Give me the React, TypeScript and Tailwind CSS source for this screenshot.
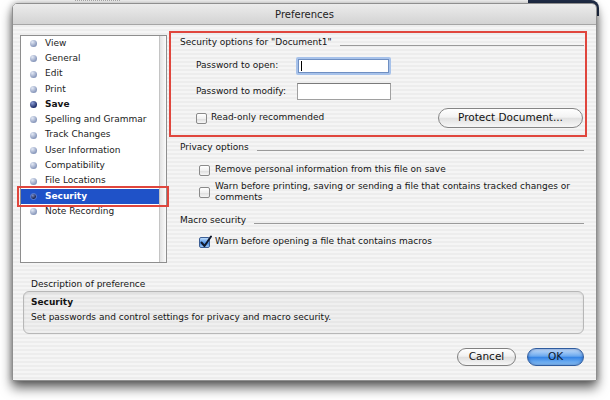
import React from "react";

function Bullet({ kind }: { kind: "normal" | "dark" | "sel" }) {
  if (kind === "dark")
    return <div className="w-[7px] h-[7px] rounded-full bg-[radial-gradient(circle_at_35%_30%,#8ea0d6,#1d2d6a_70%)] shrink-0" />;
  if (kind === "sel")
    return <div className="w-[7px] h-[7px] rounded-full bg-[radial-gradient(circle_at_35%_30%,#7d8fc9,#14204d_70%)] border border-[#5f7fd6] shrink-0" />;
  return <div className="w-[7px] h-[7px] rounded-full bg-[radial-gradient(circle_at_35%_30%,#e3e9f5,#8393b8_75%)] shrink-0" />;
}

function Checkbox({ checked }: { checked?: boolean }) {
  if (checked)
    return (
      <div className="relative w-[11px] h-[11px] rounded-[2px] border border-[#3d5f95] bg-[linear-gradient(#bcdcfb,#5d9be8_50%,#3f84e0_55%,#9cc8f5)] shrink-0">
        <svg className="absolute left-[0px] top-[-3px]" width="12" height="13" viewBox="0 0 12 13">
          <path d="M1.5 7.5 L4.5 11 L11 1.5" fill="none" stroke="#111a2e" strokeWidth="2" strokeLinecap="round" strokeLinejoin="round" />
        </svg>
      </div>
    );
  return <div className="w-[11px] h-[11px] rounded-[2px] border border-[#8a8a8a] bg-[linear-gradient(#ffffff,#f0f0f0_50%,#dedede_55%,#f6f6f6)] shrink-0" />;
}

function Heading({ text }: { text: string }) {
  return (
    <div className="flex items-center h-[12px]">
      <span className="whitespace-nowrap">{text}</span>
      <div className="flex-1 h-px bg-[#9a9a9a] ml-[8px] mt-[5px]" />
    </div>
  );
}

const items: { label: string; kind: "normal" | "dark" | "sel" }[] = [
  { label: "View", kind: "normal" },
  { label: "General", kind: "normal" },
  { label: "Edit", kind: "normal" },
  { label: "Print", kind: "normal" },
  { label: "Save", kind: "dark" },
  { label: "Spelling and Grammar", kind: "normal" },
  { label: "Track Changes", kind: "normal" },
  { label: "User Information", kind: "normal" },
  { label: "Compatibility", kind: "normal" },
  { label: "File Locations", kind: "normal" },
  { label: "Security", kind: "sel" },
  { label: "Note Recording", kind: "normal" },
];

export default function App() {
  return (
    <div className="relative w-[610px] h-[400px] bg-white overflow-hidden font-['DejaVu_Sans',sans-serif] text-[9px] text-[#141414]">
      <div className="absolute left-[528px] top-0 w-[71px] h-[16px] bg-[#22304c] rounded-tr-[8px]" />
      <div className="absolute left-[75px] top-0 w-[45px] h-[2px] border-t border-dotted border-[#b5b5b5]" />
      <div className="relative ml-[12px] mt-[3px] w-[585px] h-[378px] flex flex-col rounded-t-[5px] border border-[#8f8f8f] shadow-[0_7px_12px_rgba(0,0,0,0.6),0_0_6px_rgba(0,0,0,0.3)] overflow-hidden">
        <div className="h-[21px] shrink-0 flex items-center justify-center bg-[linear-gradient(#ececec,#d3d3d3)] border-b border-[#a5a5a5] text-[10px] text-[#222]">
          Preferences
        </div>
        <div className="flex-1 flex flex-col pl-[7px] pr-[8px] pt-[6px] bg-[repeating-linear-gradient(#ededed_0px,#ededed_2px,#f5f5f5_2px,#f5f5f5_4px)]">
          <div className="flex h-[232px]">
            {/* list */}
            <div className="relative mt-[4px] h-[228px] w-[147px] flex border border-[#8e8e8e] bg-white shrink-0">
              <div className="flex-1 flex flex-col">
                {items.map((it) => (
                  <div
                    key={it.label}
                    className={
                      it.kind === "sel"
                        ? "h-[15.27px] flex items-center pl-[9px] gap-[8px] bg-[#1f52c8] text-white font-bold"
                        : it.kind === "dark"
                        ? "h-[15.27px] flex items-center pl-[9px] gap-[8px] font-bold"
                        : "h-[15.27px] flex items-center pl-[9px] gap-[8px] text-[#222]"
                    }
                  >
                    <Bullet kind={it.kind} />
                    <span className="whitespace-nowrap">{it.label}</span>
                  </div>
                ))}
              </div>
              <div className="w-[7px] border-l border-[#c4c4c4] bg-[linear-gradient(90deg,#e2e2e2,#fbfbfb)]" />
              <div className="absolute left-[-4px] top-[150px] w-[152px] h-[21px] border-2 border-[#e0463d]" />
            </div>
            {/* right pane */}
            <div className="ml-[2px] w-[418px] flex flex-col">
              <div className="border-2 border-[#e0463d] pl-[9px] pr-[1px] pt-[4px] pb-[7px] h-[106px]">
                <Heading text={'Security options for "Document1"'} />
                <div className="flex items-center h-[18px] mt-[8px] ml-[16px]">
                  <span className="w-[100px] whitespace-nowrap">Password to open:</span>
                  <div className="w-[95px] h-[18px] rounded-[2px] bg-[#a7c2ea] p-[2px]">
                    <div className="w-full h-full bg-white border border-[#6f8fc2] flex items-center pl-[2px]">
                      <div className="w-px h-[10px] bg-black" />
                    </div>
                  </div>
                </div>
                <div className="flex items-center h-[17px] mt-[8px] ml-[16px]">
                  <span className="w-[101px] whitespace-nowrap">Password to modify:</span>
                  <div className="w-[94px] h-[17px] bg-white border border-[#a0a0a0] border-t-[#7a7a7a]" />
                </div>
                <div className="flex items-center h-[20px] mt-[8px] ml-[16px] pr-[1px]">
                  <Checkbox />
                  <span className="ml-[4px] whitespace-nowrap">Read-only recommended</span>
                  <div className="flex-1" />
                  <div className="w-[145px] h-[20px] rounded-full border border-[#858585] bg-[linear-gradient(#ffffff,#f3f3f3_45%,#e1e1e1_52%,#f7f7f7)] flex items-center justify-center text-[10.5px] text-[#111]">
                    Protect Document...
                  </div>
                </div>
              </div>
              <div className="mt-[5px] pl-[11px] pr-[3px]">
                <Heading text="Privacy options" />
                <div className="flex items-center h-[12px] mt-[10px] ml-[19px]">
                  <Checkbox />
                  <span className="ml-[5px] whitespace-nowrap">Remove personal information from this file on save</span>
                </div>
                <div className="flex items-center mt-[5px] ml-[19px]">
                  <Checkbox />
                  <div className="ml-[5px] leading-[11px] whitespace-nowrap">
                    Warn before printing, saving or sending a file that contains tracked changes or
                    <br />
                    comments
                  </div>
                </div>
                <div className="mt-[12px]">
                  <Heading text="Macro security" />
                </div>
                <div className="flex items-center h-[12px] mt-[9px] ml-[19px]">
                  <Checkbox checked />
                  <span className="ml-[5px] whitespace-nowrap">Warn before opening a file that contains macros</span>
                </div>
              </div>
            </div>
          </div>
          {/* description */}
          <div className="mt-[15px] ml-[11px] h-[12px] leading-[12px] whitespace-nowrap">Description of preference</div>
          <div className="mt-[1px] ml-[3px] w-[561px] h-[43px] rounded-[6px] border border-[#b7b7b7] bg-black/[0.025] shadow-[inset_0_1px_2px_rgba(0,0,0,0.08)] pl-[7px] pt-[4px]">
            <div className="h-[12px] leading-[12px] font-bold">Security</div>
            <div className="mt-[3px] h-[12px] leading-[12px] whitespace-nowrap">Set passwords and control settings for privacy and macro security.</div>
          </div>
          {/* buttons */}
          <div className="flex justify-end gap-[11px] mt-[14px] mr-[4px]">
            <div className="w-[59px] h-[18px] rounded-full border border-[#808080] bg-[linear-gradient(#ffffff,#f1f1f1_45%,#dfdfdf_52%,#f6f6f6)] flex items-center justify-center text-[10.5px] text-[#111]">
              Cancel
            </div>
            <div className="w-[57px] h-[18px] rounded-full border border-[#2f5c9e] bg-[linear-gradient(#c9e0fb,#6aa8ee_45%,#3685e6_52%,#8cc3f6)] shadow-[inset_0_0_3px_rgba(20,60,140,0.6)] flex items-center justify-center text-[10.5px] text-[#0c1a30]">
              OK
            </div>
          </div>
        </div>
      </div>
    </div>
  );
}
